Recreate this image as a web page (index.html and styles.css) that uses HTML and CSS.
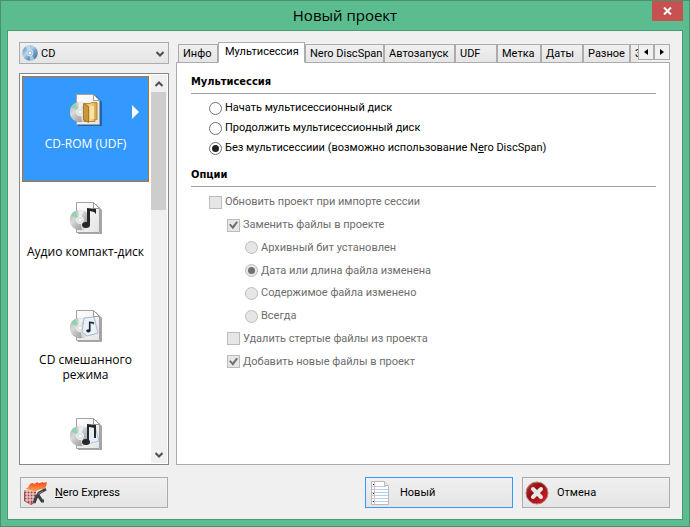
FILE: index.html
```html
<!DOCTYPE html>
<html lang="ru">
<head>
<meta charset="utf-8">
<title>Новый проект</title>
<link rel="stylesheet" href="styles.css">
</head>
<body>
<svg class="defs" aria-hidden="true">
  <defs>
    <linearGradient id="silver" x1="0" y1="0" x2="1" y2="1">
      <stop offset="0" stop-color="#a9a9a9"/><stop offset=".35" stop-color="#d9d9d9"/><stop offset=".6" stop-color="#b5b5b5"/><stop offset="1" stop-color="#8c8c8c"/>
    </linearGradient>
    <linearGradient id="paper" x1="0" y1="0" x2="1" y2="1">
      <stop offset="0" stop-color="#fff"/><stop offset="1" stop-color="#e4e4e4"/>
    </linearGradient>
    <linearGradient id="gold" x1="0" y1="0" x2="1" y2="0">
      <stop offset="0" stop-color="#c79a3c"/><stop offset=".5" stop-color="#f3d787"/><stop offset="1" stop-color="#cf9f42"/>
    </linearGradient>
    <linearGradient id="blue" x1="0" y1="0" x2="1" y2="1">
      <stop offset="0" stop-color="#5787b0"/><stop offset=".4" stop-color="#b5d2e8"/><stop offset=".6" stop-color="#6f9fc8"/><stop offset="1" stop-color="#426f99"/>
    </linearGradient>
    <linearGradient id="red" x1="0" y1="0" x2="1" y2="1">
      <stop offset="0" stop-color="#b54040"/><stop offset=".4" stop-color="#950f12"/><stop offset="1" stop-color="#e02024"/>
    </linearGradient>
    <linearGradient id="fire" x1="0" y1="0" x2="0" y2="1">
      <stop offset="0" stop-color="#f5481c"/><stop offset="1" stop-color="#ffa04a"/>
    </linearGradient>
    <symbol id="disc-page" viewBox="0 0 32 32">
      <path d="M8 2h18l6 6v24H8z" fill="#000" opacity=".35"/>
      <path d="M6.500.5h17l6 6v24h-23z" fill="url(#paper)" stroke="#a2a2a2"/>
      <path d="M23.500.5v6h6z" fill="#fff" stroke="#999"/>
      <circle cx="10" cy="18" r="10.300" fill="url(#silver)"/>
      <path d="M10 18 1 13a10 10 0 0 1 4-4z" fill="#73d9a5" opacity=".75"/>
      <path d="M10 18 8 8a10 10 0 0 1 6 1zM10 18l7 8a10 10 0 0 1-5 2z" fill="#fff" opacity=".6"/>
      <circle cx="10" cy="18" r="3.500" fill="#ddd" stroke="#f5f5f5"/>
      <circle cx="10" cy="18" r="1.500" fill="#fff"/>
    </symbol>
    <symbol id="note" viewBox="0 0 14 22">
      <path d="M5 18V1l9 1v5l-2-2-4-1v14z" fill="#262626"/>
      <ellipse cx="4" cy="18" rx="4" ry="3" fill="#262626"/>
    </symbol>
  </defs>
</svg>

<main class="window">
  <header class="titlebar">
    <h1>Новый проект</h1>
    <button class="close" aria-label="Закрыть"><svg width="9" height="8" viewBox="0 0 9 8"><path d="M1 0.500 8 7.500M8 .5 1 7.500" stroke="#fff" stroke-width="2"/></svg></button>
  </header>

  <div class="client">
    <aside class="side">
      <div class="combo">
        <svg class="combo-disc" width="16" height="16" viewBox="0 0 16 16"><circle cx="8" cy="8" r="7.800" fill="url(#blue)"/><path d="M8 8 3 1.500A8 8 0 0 1 8 0zM8 8l5 6.500A8 8 0 0 1 8 16z" fill="#d8e9f5" opacity=".6"/><circle cx="8" cy="8" r="3" fill="#9cc3e0" stroke="#d0e2ef"/><circle cx="8" cy="8" r="1.300" fill="#fff"/></svg>
        <select aria-label="Тип диска"><option>CD</option></select>
        <svg class="combo-arrow" width="8" height="6" viewBox="0 0 8 6"><path d="M.5 1 4 4.500 7.500 1" fill="none" stroke="#505050" stroke-width="2"/></svg>
      </div>
      <div class="list">
        <div class="items">
          <button class="item selected">
            <svg width="32" height="32" viewBox="0 0 32 32"><use href="#disc-page" width="32" height="32"/><path d="M14 9.500h6l2-1h5v17h-2v2H14z" fill="url(#gold)" stroke="#b5883a"/><path d="m13.500 9.500 5 3v16l-5-3z" fill="#c9983c" stroke="#a87b2a"/><path d="M20 12h4v13h-4z" fill="#f7e3a8"/></svg>
            <span>CD-ROM (UDF)</span>
            <svg class="more" width="7" height="14" viewBox="0 0 7 14"><path d="M0 0l7 7-7 7z" fill="#fff"/></svg>
          </button>
          <button class="item">
            <svg width="32" height="32" viewBox="0 0 32 32"><use href="#disc-page" width="32" height="32"/><use href="#note" x="12" y="5" width="14" height="22"/></svg>
            <span>Аудио компакт-диск</span>
          </button>
          <button class="item">
            <svg width="32" height="32" viewBox="0 0 32 32"><use href="#disc-page" width="32" height="32"/><path d="m14 8 10-1 4 16-11 3-5-4z" fill="#e8f2fc" stroke="#aab8c6"/><use href="#note" x="16" y="11" width="8" height="12"/></svg>
            <span>CD смешанного режима</span>
          </button>
          <button class="item" aria-label="CD EXTRA">
            <svg width="32" height="32" viewBox="0 0 32 32"><use href="#disc-page" width="32" height="32"/><path d="m17 9 8-1 4 15-12 3z" fill="#e3eefa" stroke="#b3c3d3"/><path d="M17 24V6l9 1v13h-2V10l-5-1v15z" fill="#262626" fill-rule="evenodd"/><path d="M19 9.500 24 10v12l-5 2z" fill="#e3eefa"/><ellipse cx="16" cy="24" rx="4" ry="3" fill="#262626"/></svg>
          </button>
        </div>
        <div class="scroll">
          <button aria-label="Вверх"><svg width="8" height="6" viewBox="0 0 8 6"><path d="M.5 5 4 1.500 7.500 5" fill="none" stroke="#505050" stroke-width="2"/></svg></button>
          <div class="track"><div class="thumb"></div></div>
          <button aria-label="Вниз"><svg width="8" height="6" viewBox="0 0 8 6"><path d="M.5 1 4 4.500 7.500 1" fill="none" stroke="#505050" stroke-width="2"/></svg></button>
        </div>
      </div>
    </aside>

    <section class="pages">
      <nav class="tabbar">
        <div class="tabs" role="tablist">
          <button role="tab">Инфо</button>
          <button role="tab" class="active" aria-selected="true">Мультисессия</button>
          <button role="tab">Nero DiscSpan</button>
          <button role="tab">Автозапуск</button>
          <button role="tab">UDF</button>
          <button role="tab">Метка</button>
          <button role="tab">Даты</button>
          <button role="tab">Разное</button>
          <button role="tab">Запись</button>
        </div>
        <div class="spin">
          <button aria-label="Назад"><svg width="4" height="6" viewBox="0 0 4 6"><path d="M4 0v6L0 3z"/></svg></button>
          <button aria-label="Вперёд"><svg width="4" height="6" viewBox="0 0 4 6"><path d="M0 0v6l4-3z"/></svg></button>
        </div>
      </nav>
      <div class="page">
        <h2>Мультисессия</h2>
        <div class="modes">
          <label><input type="radio" name="mode">Начать мультисессионный диск</label>
          <label><input type="radio" name="mode">Продолжить мультисессионный диск</label>
          <label><input type="radio" name="mode" checked><span>Без мультисессиии (возможно использование N<u>e</u>ro DiscSpan)</span></label>
        </div>
        <h2>Опции</h2>
        <div class="options">
          <label><input type="checkbox" disabled>Обновить проект при импорте сессии</label>
          <label class="level1"><input type="checkbox" checked disabled>Заменить файлы в проекте</label>
          <label class="level2"><input type="radio" name="rule" disabled>Архивный бит установлен</label>
          <label class="level2"><input type="radio" name="rule" checked disabled>Дата или длина файла изменена</label>
          <label class="level2"><input type="radio" name="rule" disabled>Содержимое файла изменено</label>
          <label class="level2"><input type="radio" name="rule" disabled>Всегда</label>
          <label class="level1"><input type="checkbox" disabled>Удалить стертые файлы из проекта</label>
          <label class="level1"><input type="checkbox" checked disabled>Добавить новые файлы в проект</label>
        </div>
      </div>
    </section>

    <footer class="actions">
      <button class="push express">
        <svg width="24" height="24" viewBox="0 0 24 24"><path d="m1 9 12 1v11l-5 3-7-4z" fill="#a54747"/><path d="M1 10h13M2 13h11M2 16h11M2 19h11M4 9v12M7 9v14M10 9v13" stroke="#f3e4e4"/><path d="m23 8-7 4-3 5-2 5M15 14l4 6h2" fill="none" stroke="#3f3f43" stroke-width="3"/><path d="m20 10-5 3" stroke="#888"/><path d="M2 8C7 7 5 2 10 2c1 2 2 0 5-1-1 2 2 1 5 0 0 1 2 1 4 0-1 3 0 5-3 7-3-1-5 2-8 2-4 1-7-2-11-2z" fill="url(#fire)"/></svg>
        <span><u>N</u>ero Express</span>
      </button>
      <button class="push default">
        <svg width="24" height="24" viewBox="0 0 24 24"><path d="M3.500.5h13l4 4v19h-17z" fill="#fff" stroke="#b9b9b9"/><path d="M4 5.500h14M4 8.500h16M4 11.500h16M4 14.500h16M4 17.500h16M4 20.500h16" stroke="#b4cfec"/><path d="M6.500 1v22" stroke="#efb8b0"/><path d="M16.500.5v4h4" fill="#eee" stroke="#b9b9b9"/><path d="M5 3h1v1H5zM5 12h1v1H5zM5 20h1v1H5z" fill="#333"/></svg>
        <span>Новый</span>
      </button>
      <button class="push">
        <svg width="24" height="24" viewBox="0 0 24 24"><circle cx="12" cy="12" r="11" fill="url(#red)" stroke="#b98080"/><path d="m8 8 8 8M16 8l-8 8" stroke="#e8e8e8" stroke-width="4" stroke-linecap="round"/></svg>
        <span>Отмена</span>
      </button>
    </footer>
  </div>
</main>
</body>
</html>
```
FILE: styles.css
```css
* { box-sizing: border-box; }

body {
  margin: 0;
  font: 11px/14px Roboto, "Noto Sans", sans-serif;
  color: #000;
}

button, select, input { font: inherit; color: inherit; margin: 0; }
button { padding: 0; border: 0; background: none; }
svg { display: block; flex: none; }
.defs { position: absolute; width: 0; height: 0; }

.window {
  display: flex;
  flex-direction: column;
  min-height: 100vh;
  padding: 0 6px 6px;
  border: 1px solid #48916d;
  background: #5bbd8f;
}

.titlebar {
  position: relative;
  height: 29px;
  text-align: center;
}
.titlebar h1 {
  margin: 0;
  font: 15px/29px "Open Sans", "Noto Sans", sans-serif;
}
.close {
  position: absolute;
  top: 0;
  right: 0;
  display: grid;
  place-items: center;
  width: 31px;
  height: 20px;
  background: #c75050;
}

.client {
  flex: 1;
  display: grid;
  grid-template-columns: 150px 1fr;
  grid-template-rows: 1fr auto;
  column-gap: 7px;
  row-gap: 12px;
  padding: 11px 12px 11px 11px;
  border: 1px solid #4a9a74;
  background: #f0f0f0;
}

.side {
  display: flex;
  flex-direction: column;
  gap: 9px;
}

.combo { position: relative; height: 22px; }
.combo select {
  width: 100%;
  height: 100%;
  padding: 2px 20px 0 21px;
  border: 1px solid #acacac;
  border-radius: 0;
  appearance: none;
  background: linear-gradient(#f0f0f0, #e5e5e5);
}
.combo-disc { position: absolute; left: 3px; top: 3px; }
.combo-arrow { position: absolute; right: 5px; top: 9px; }

.list {
  flex: 1 1 0;
  display: flex;
  min-height: 0;
  padding: 1px;
  border: 1px solid #828790;
  background: #fff;
  overflow: hidden;
}
.items {
  flex: 1 1 0;
  display: flex;
  flex-direction: column;
  gap: 2px;
  padding: 1px 2px 0 1px;
  height: 0;
  min-height: 100%;
  overflow: hidden;
}
.item {
  position: relative;
  display: flex;
  flex: none;
  flex-direction: column;
  align-items: center;
  gap: 10px;
  height: 106px;
  padding: 17px 16px 0;
  border: 1px solid transparent;
  font: 12px/15px "Open Sans", "Noto Sans", sans-serif;
}
.item span { margin: 0 -14px; max-width: 120px; }
.selected {
  border-color: #c8700f;
  background: #3399ff;
  color: #fff;
}
.more { position: absolute; right: 9px; top: 28px; }

.scroll {
  display: flex;
  flex-direction: column;
  width: 16px;
  background: #f0f0f0;
}
.scroll button {
  display: grid;
  place-items: center;
  height: 17px;
}
.track { flex: 1; }
.thumb { width: 15px; height: 118px; background: #cdcdcd; }

.pages { display: flex; flex-direction: column; min-width: 0; }
.tabbar {
  display: flex;
  height: 20px;
  padding-left: 2px;
}
.tabs {
  position: relative;
  z-index: 1;
  flex: 1 1 0;
  display: grid;
  grid-template-columns: 40px 87px 79px 71px 42px 44px 42px 47px 50px;
  align-items: end;
  height: 21px;
  overflow: hidden;
}
.tabs button {
  height: 19px;
  padding: 1px 4px 0;
  border: 1px solid #acacac;
  background: linear-gradient(#f0f0f0, #e5e5e5);
  text-align: left;
  white-space: nowrap;
}
.tabs .active {
  height: 21px;
  padding: 0 6px 1px;
  border-bottom-color: #fff;
  background: #fff;
}
.spin { display: flex; padding-top: 2px; }
.spin button {
  display: grid;
  place-items: center;
  width: 16px;
  height: 16px;
  border: 1px solid #acacac;
}

.page {
  flex: 1;
  padding: 12px 13px 0 14px;
  border: 1px solid #acacac;
  background: #fff;
}
h2 {
  margin: 0;
  padding-bottom: 4px;
  border-bottom: 1px solid #a0a0a0;
  font: bold 11px/14px "DejaVu Sans Condensed", "DejaVu Sans", sans-serif;
}
.modes {
  display: grid;
  grid-auto-rows: 20px;
  margin: 4px 0 10px;
  padding-left: 18px;
}
.options {
  display: grid;
  grid-template-rows: repeat(8, 1fr);
  height: 182px;
  margin-top: 4px;
  padding-left: 18px;
  color: #6d6d6d;
}
label {
  display: flex;
  align-items: center;
  gap: 3px;
  white-space: nowrap;
}
.level1 { padding-left: 18px; }
.level2 { padding-left: 36px; }

input {
  display: grid;
  place-items: center;
  width: 13px;
  height: 13px;
  border: 1px solid #707070;
  appearance: none;
  background: #fff;
}
input:disabled { border-color: #bcbcbc; background: #e6e6e6; }
input[type="radio"] { border-radius: 50%; }
input[type="radio"]:checked::before {
  content: "";
  width: 7px;
  height: 7px;
  border-radius: 50%;
  background: #212121;
}
input[type="radio"]:disabled::before { background: #707070; }
input[type="checkbox"]:checked::before {
  content: "";
  width: 9px;
  height: 8px;
  background: #707070;
  clip-path: polygon(0 45%, 18% 32%, 40% 62%, 82% 0, 100% 14%, 44% 100%);
}

.actions {
  grid-column: 1 / -1;
  display: flex;
  gap: 9px;
  padding-left: 1px;
}
.push {
  display: flex;
  align-items: center;
  gap: 8px;
  width: 148px;
  height: 31px;
  padding-left: 2px;
  border: 1px solid #acacac;
  background: linear-gradient(#f0f0f0, #e5e5e5);
}
.express { margin-right: auto; }
.default { border-color: #3399ff; }
```
